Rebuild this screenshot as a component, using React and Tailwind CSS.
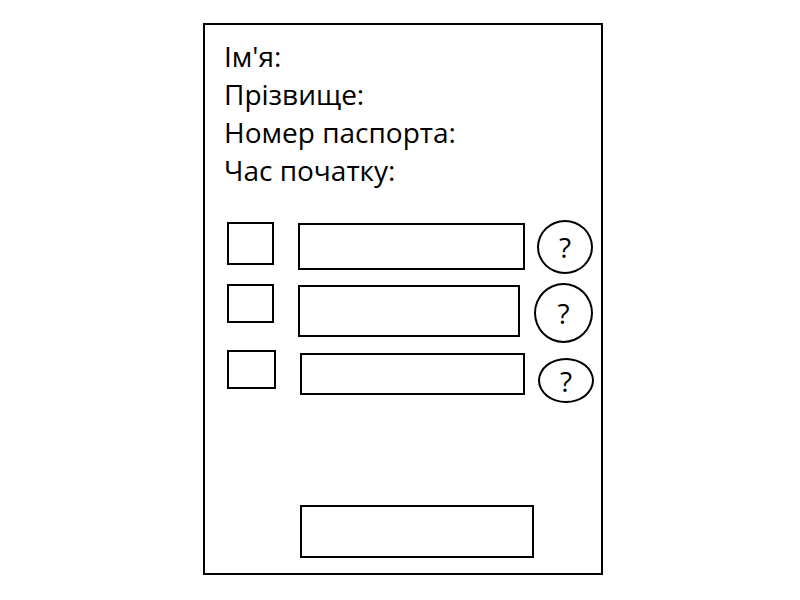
import React from "react";

const labels = ["Ім'я:", "Прізвище:", "Номер паспорта:", "Час початку:"];

// each row: checkbox, text field and help circle, measured from the sketch
const rows = [
  {
    row: "h-[54px]",
    box: "mt-[2px] w-[47px] h-[43px]",
    field: "ml-[24px] mt-[3px] w-[227px] h-[47px]",
    help: "ml-[12px] w-[56px] h-[54px]",
  },
  {
    row: "h-[60px] mt-[9px]",
    box: "mt-[1px] w-[47px] h-[39px]",
    field: "ml-[24px] mt-[2px] w-[222px] h-[52px]",
    help: "ml-[14px] w-[59px] h-[60px]",
  },
  {
    row: "h-[53px] mt-[7px]",
    box: "w-[49px] h-[39px]",
    field: "ml-[24px] mt-[3px] w-[225px] h-[42px]",
    help: "ml-[13px] mt-[8px] w-[56px] h-[45px]",
  },
];

const App = () => {
  return (
    <div
      className="w-[800px] h-[600px] bg-white pt-[23px] pl-[203px]"
      style={{ fontFamily: "'Open Sans', 'Noto Sans', sans-serif" }}
    >
      <div className="w-[400px] h-[552px] border-2 border-black flex flex-col">
        {/* Form labels */}
        <div className="pl-[19px] pt-[12px] flex flex-col text-[28px] leading-[38px] text-black">
          {labels.map((label) => (
            <div key={label}>{label}</div>
          ))}
        </div>

        {/* Fields */}
        <div className="pl-[22px] mt-[31px] flex flex-col">
          {rows.map((r, i) => (
            <div key={i} className={`flex items-start ${r.row}`}>
              <div className={`border-2 border-black ${r.box}`} />
              <div className={`border-2 border-black ${r.field}`} />
              <div
                className={`border-2 border-black rounded-[50%] flex items-center justify-center text-[28px] leading-none text-black ${r.help}`}
              >
                ?
              </div>
            </div>
          ))}
        </div>

        {/* Submit button */}
        <div className="mt-auto mb-[15px] ml-[95px] w-[234px] h-[53px] border-2 border-black" />
      </div>
    </div>
  );
};

export default App;
